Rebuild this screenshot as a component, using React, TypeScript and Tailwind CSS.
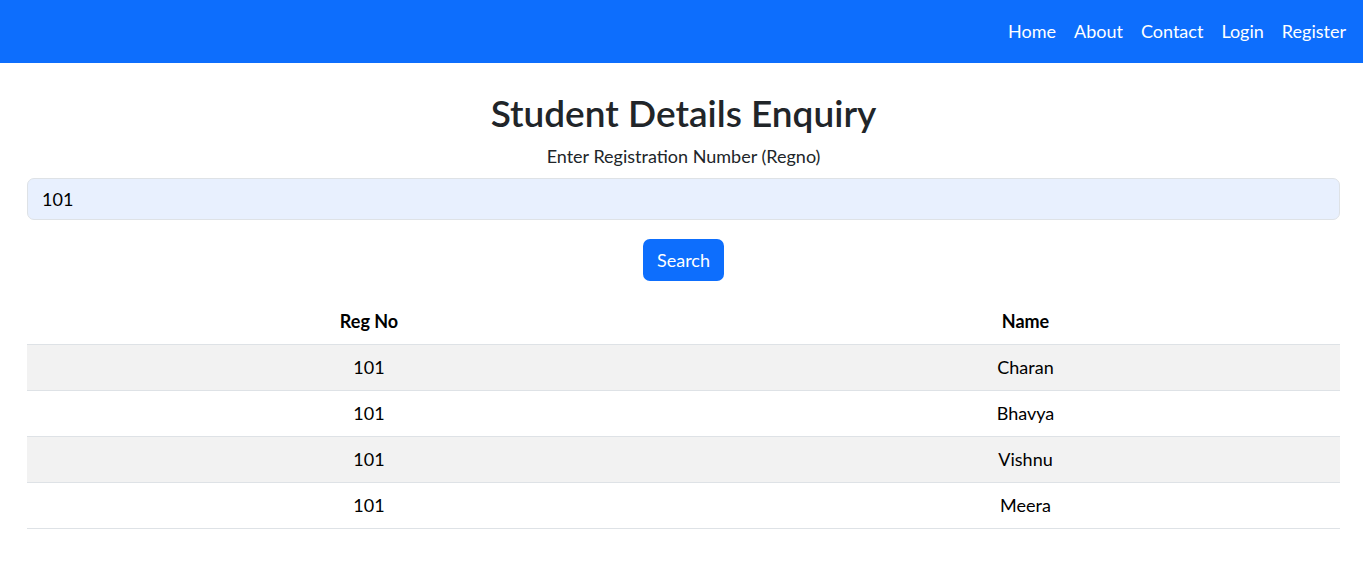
import React from "react";

const students = [
  { regno: "101", name: "Charan" },
  { regno: "101", name: "Bhavya" },
  { regno: "101", name: "Vishnu" },
  { regno: "101", name: "Meera" },
];

const links = ["Home", "About", "Contact", "Login", "Register"];

const App = () => {
  return (
    <div className="min-h-[569px] bg-white font-['Lato',sans-serif] text-[#212529]">
      <nav className="h-[63px] bg-[#0d6efd] flex items-center justify-end pr-[17px]">
        <ul className="flex gap-[18px] text-[18px] text-white">
          {links.map((l) => (
            <li key={l}>
              <a href="#">{l}</a>
            </li>
          ))}
        </ul>
      </nav>

      <div className="pl-[27px] pr-[23px]">
        <h2 className="mt-[28px] text-center text-[37px] leading-[43px] font-semibold">
          Student Details Enquiry
        </h2>
        <p className="mt-[9px] text-center text-[18px] leading-[27px]">
          Enter Registration Number (Regno)
        </p>
        <input
          className="mt-[8px] block w-full h-[42px] rounded-[7px] border border-[#dee2e6] bg-[#e8f0fe] px-[14px] text-[18px] text-black outline-none"
          defaultValue="101"
        />
        <div className="mt-[19px] flex justify-center">
          <button className="h-[42px] rounded-[7px] bg-[#0d6efd] px-[14px] text-[18px] text-white">
            Search
          </button>
        </div>

        <div className="mt-[18px] text-[18px] text-black">
          <div className="grid grid-cols-[684px_1fr] h-[46px] items-center border-b border-[#dee2e6] font-bold">
            <div className="text-center">Reg No</div>
            <div className="text-center">Name</div>
          </div>
          {students.map((s, i) => (
            <div
              key={s.name}
              className={
                "grid grid-cols-[684px_1fr] h-[46px] items-center border-b border-[#dee2e6] " +
                (i % 2 === 0 ? "bg-[#f2f2f2]" : "bg-white")
              }
            >
              <div className="text-center">{s.regno}</div>
              <div className="text-center">{s.name}</div>
            </div>
          ))}
        </div>
      </div>
    </div>
  );
};

export default App;
